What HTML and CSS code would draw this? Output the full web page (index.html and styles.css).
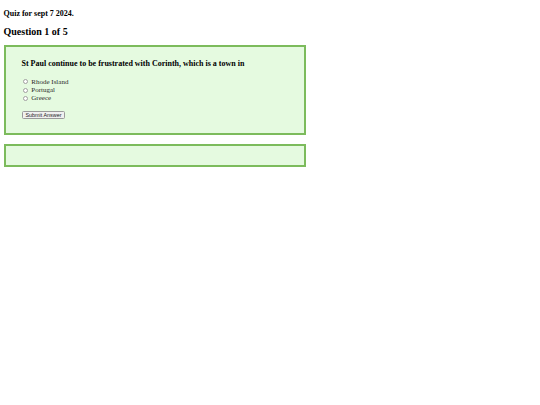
FILE: index.html
```html
<!DOCTYPE html>
<html lang="en">
<head>
<meta charset="utf-8">
<title>Quiz</title>
<link rel="stylesheet" href="styles.css">
</head>
<body>
  <div class="page">
    <p class="quiz-title">Quiz for sept 7 2024.</p>
    <h2 class="progress">Question 1 of 5</h2>
    <div class="box">
      <div class="question">
        <h3 class="q-text">St Paul continue to be frustrated with Corinth, which is a town in</h3>
        <div class="options">
          <label class="option"><input type="radio" name="answer" class="radio"><span>Rhode Island</span></label>
          <label class="option"><input type="radio" name="answer" class="radio"><span>Portugal</span></label>
          <label class="option"><input type="radio" name="answer" class="radio"><span>Greece</span></label>
        </div>
        <button class="submit" type="button">Submit Answer</button>
      </div>
    </div>
    <div class="box result"></div>
  </div>
</body>
</html>
```

FILE: styles.css
```css
html, body {
  margin: 0;
  padding: 0;
  background: #ffffff;
}

body {
  font-family: "Liberation Serif", "Times New Roman", serif;
  color: #000;
}

.page {
  padding: 0 0 0 3.5px;
}

.quiz-title {
  margin: 0;
  padding-top: 8.5px;
  font-size: 8px;
  line-height: 9.2px;
  font-weight: bold;
}

.progress {
  margin: 8.7px 0 0 0;
  font-size: 10px;
  line-height: 11.5px;
  font-weight: bold;
}

.box {
  box-sizing: border-box;
  width: 302.5px;
  margin-top: 7px;
  padding: 9px 9.5px;
  background: #e5fae0;
  border: 2px solid #7cbb5c;
}

.result {
  margin-top: 8.5px;
  height: 23.5px;
}

.question {
  padding-left: 6.5px;
  padding-bottom: 5.5px;
}

.q-text {
  margin: 3.5px 0 0 0;
  font-size: 8px;
  line-height: 9.2px;
  font-weight: bold;
}

.options {
  margin-top: 9px;
  display: flex;
  flex-direction: column;
}

.option {
  display: flex;
  align-items: center;
  font-size: 7px;
  line-height: 8.3px;
  font-weight: normal;
  color: #2a2a2a;
}

.radio {
  appearance: none;
  -webkit-appearance: none;
  box-sizing: border-box;
  width: 5px;
  height: 5px;
  margin: 0 3.4px 0 1.4px;
  flex: none;
  border: 0.6px solid #a0a0a0;
  border-radius: 50%;
  background: #ffffff;
}

.submit {
  display: block;
  margin-top: 8.5px;
  padding: 0 3px;
  height: 7.6px;
  font-family: "Liberation Sans", Arial, sans-serif;
  font-size: 5.4px;
  line-height: 6px;
  color: #222;
  background: #f0f0f0;
  border: 0.6px solid #9a9a9a;
  border-radius: 1.5px;
}
```
